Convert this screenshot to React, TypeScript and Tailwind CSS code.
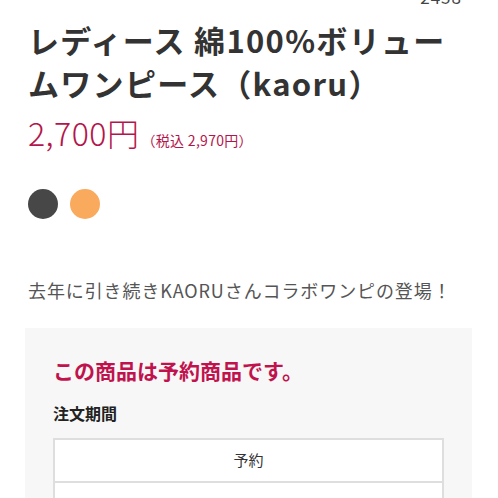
import React from 'react';

const jp = { fontFamily: '"Noto Sans CJK JP", "Noto Sans", sans-serif' };

const colors = [
  { id: 'charcoal', hex: 'bg-[#474747]' },
  { id: 'orange', hex: 'bg-[#f9aa5c]' },
];

export default function App() {
  return (
    <div className="w-[498px] h-[498px] overflow-hidden bg-white text-[#333]" style={jp}>
      {/* item number, cut off at the top */}
      <div className="flex justify-end pr-[36px] -mt-[12px] text-[17px] leading-[17px] tracking-[1px] text-[#444]">2458</div>

      <div className="px-[28px]">
        <h1 className="mt-[13px] max-w-[440px] text-[31px] leading-[43px] font-bold text-[#333] tracking-[1.3px]">
          レディース 綿100%ボリュームワンピース（kaoru）
        </h1>

        <div className="mt-[8px] flex items-baseline text-[#b3164c]">
          <span className="text-[32px] leading-[40px] font-light tracking-[0.5px]">2,700円</span>
          <span className="ml-[2px] text-[14px] tracking-[0.3px]">（税込 2,970円）</span>
        </div>

        <div className="mt-[37px] flex gap-[12px]">
          {colors.map(c => (
            <span key={c.id} className={`w-[30px] h-[30px] rounded-full ${c.hex}`} />
          ))}
        </div>

        <p className="mt-[58px] text-[18px] leading-[26px] tracking-[0.9px] text-[#555]">
          去年に引き続きKAORUさんコラボワンピの登場！
        </p>
      </div>

      <div className="mt-[25px] ml-[25px] mr-[26px] bg-[#f7f7f7] px-[28px] pt-[28px] pb-[20px]">
        <h2 className="text-[21px] leading-[28px] font-bold text-[#c0134d]">この商品は予約商品です。</h2>
        <h3 className="mt-[18px] text-[16px] leading-[22px] font-bold text-[#222]">注文期間</h3>

        <div className="mt-[14px] bg-white border-2 border-[#dedede]">
          <div className="h-[41px] flex items-center justify-center text-[15px] text-[#333]">予約</div>
          <div className="h-[44px] flex items-center justify-center border-t-2 border-[#dedede] text-[15px] text-[#333]">
            2024/10/07 10:00 〜
          </div>
        </div>
      </div>
    </div>
  );
}
